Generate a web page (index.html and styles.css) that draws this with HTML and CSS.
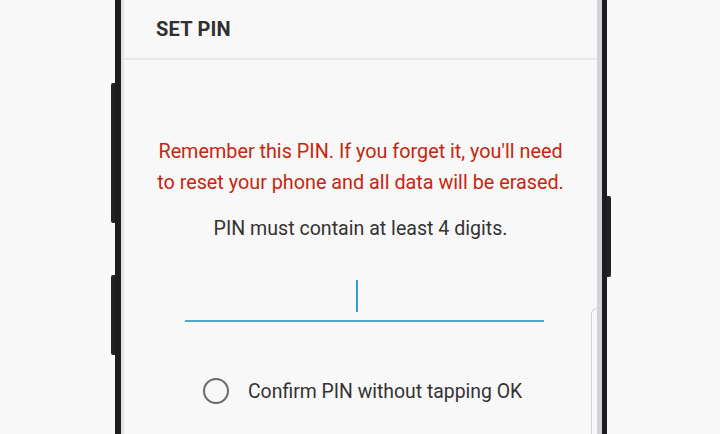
FILE: index.html
```html
<!DOCTYPE html>
<html lang="en">
<head>
  <meta charset="UTF-8">
  <title>Set PIN</title>
  <link rel="stylesheet" href="styles.css">
</head>
<body>
<div class="wrapper">
  <div class="phone">

    <div class="sideLeft">
      <div class="sideKey keyBixby"></div>
      <div class="sideKey keyVolume"></div>
    </div>

    <div class="bezel">
      <div class="screen">
        <div class="header">
          <h1>SET PIN</h1>
        </div>

        <div class="content">
          <p class="warning">Remember this PIN. If you forget it, you'll need<br>to reset your phone and all data will be erased.</p>
          <p class="hint">PIN must contain at least 4 digits.</p>

          <div class="pinField">
            <span class="cursor"></span>
          </div>

          <label class="confirmRow">
            <span class="radio"></span>
            <span class="confirmLabel">Confirm PIN without tapping OK</span>
          </label>
        </div>

        <div class="edgeHandle"></div>
      </div>
    </div>

    <div class="sideRight">
      <div class="sideKey keyPower"></div>
    </div>

  </div>
</div>
</body>
</html>
```

FILE: styles.css
```css
html, body {
  margin: 0;
  padding: 0;
}

body {
  background: #f9f9f9;
  font-family: Roboto, "Liberation Sans", sans-serif;
  width: 720px;
  height: 434px;
  overflow: hidden;
}

p {
  margin: 0;
}

.wrapper {
  padding-left: 111px;
  height: 434px;
}

.phone {
  display: flex;
  width: 500px;
  height: 434px;
}

.sideLeft,
.sideRight {
  width: 4px;
  display: flex;
  flex-direction: column;
}

.sideKey {
  background: #232325;
}

.sideLeft .sideKey {
  border-radius: 2px 0 0 2px;
}

.sideRight .sideKey {
  border-radius: 0 2px 2px 0;
}

.keyBixby {
  margin-top: 83px;
  height: 140px;
}

.keyVolume {
  margin-top: 52px;
  height: 80px;
}

.keyPower {
  margin-top: 196px;
  height: 81px;
}

.bezel {
  flex: 1;
  border-left: 6px solid #1d1d1f;
  border-right: 5px solid #1d1d1f;
}

.screen {
  position: relative;
  height: 100%;
  background: #f8f8f8;
  border-left: 3px solid #e4e4e6;
  border-right: 5px solid #d3d3d7;
  overflow: hidden;
}

.header {
  height: 58px;
  border-bottom: 2px solid #e8e8e8;
  padding-left: 32px;
  display: flex;
  align-items: center;
}

h1 {
  margin: 0;
  font-size: 20px;
  font-weight: bold;
  color: #303030;
  letter-spacing: 0.2px;
}

.content {
  display: flex;
  flex-direction: column;
  align-items: center;
  padding-top: 76px;
}

.warning {
  color: #c6260f;
  font-size: 19.8px;
  line-height: 31px;
  text-align: center;
  white-space: nowrap;
}

.hint {
  margin-top: 18px;
  color: #333;
  font-size: 19.6px;
  line-height: 26px;
}

.pinField {
  margin-top: 30px;
  margin-left: 7px;
  width: 359px;
  height: 48px;
  border-bottom: 2px solid #55a8c8;
  display: flex;
  justify-content: center;
}

.cursor {
  width: 2px;
  height: 32px;
  margin-top: 8px;
  margin-right: 14px;
  background: #3a9cc0;
}

.confirmRow {
  align-self: flex-start;
  margin-left: 79px;
  margin-top: 56px;
  display: flex;
  align-items: center;
}

.radio {
  width: 22px;
  height: 22px;
  border: 2px solid #6a6a6a;
  border-radius: 50%;
}

.confirmLabel {
  margin-left: 19px;
  font-size: 19.4px;
  color: #333;
}

.edgeHandle {
  position: absolute;
  right: 0;
  top: 308px;
  width: 5px;
  height: 140px;
  border-left: 1px solid #d2d2d2;
  border-top: 1px solid #d2d2d2;
  border-top-left-radius: 6px;
}
```
